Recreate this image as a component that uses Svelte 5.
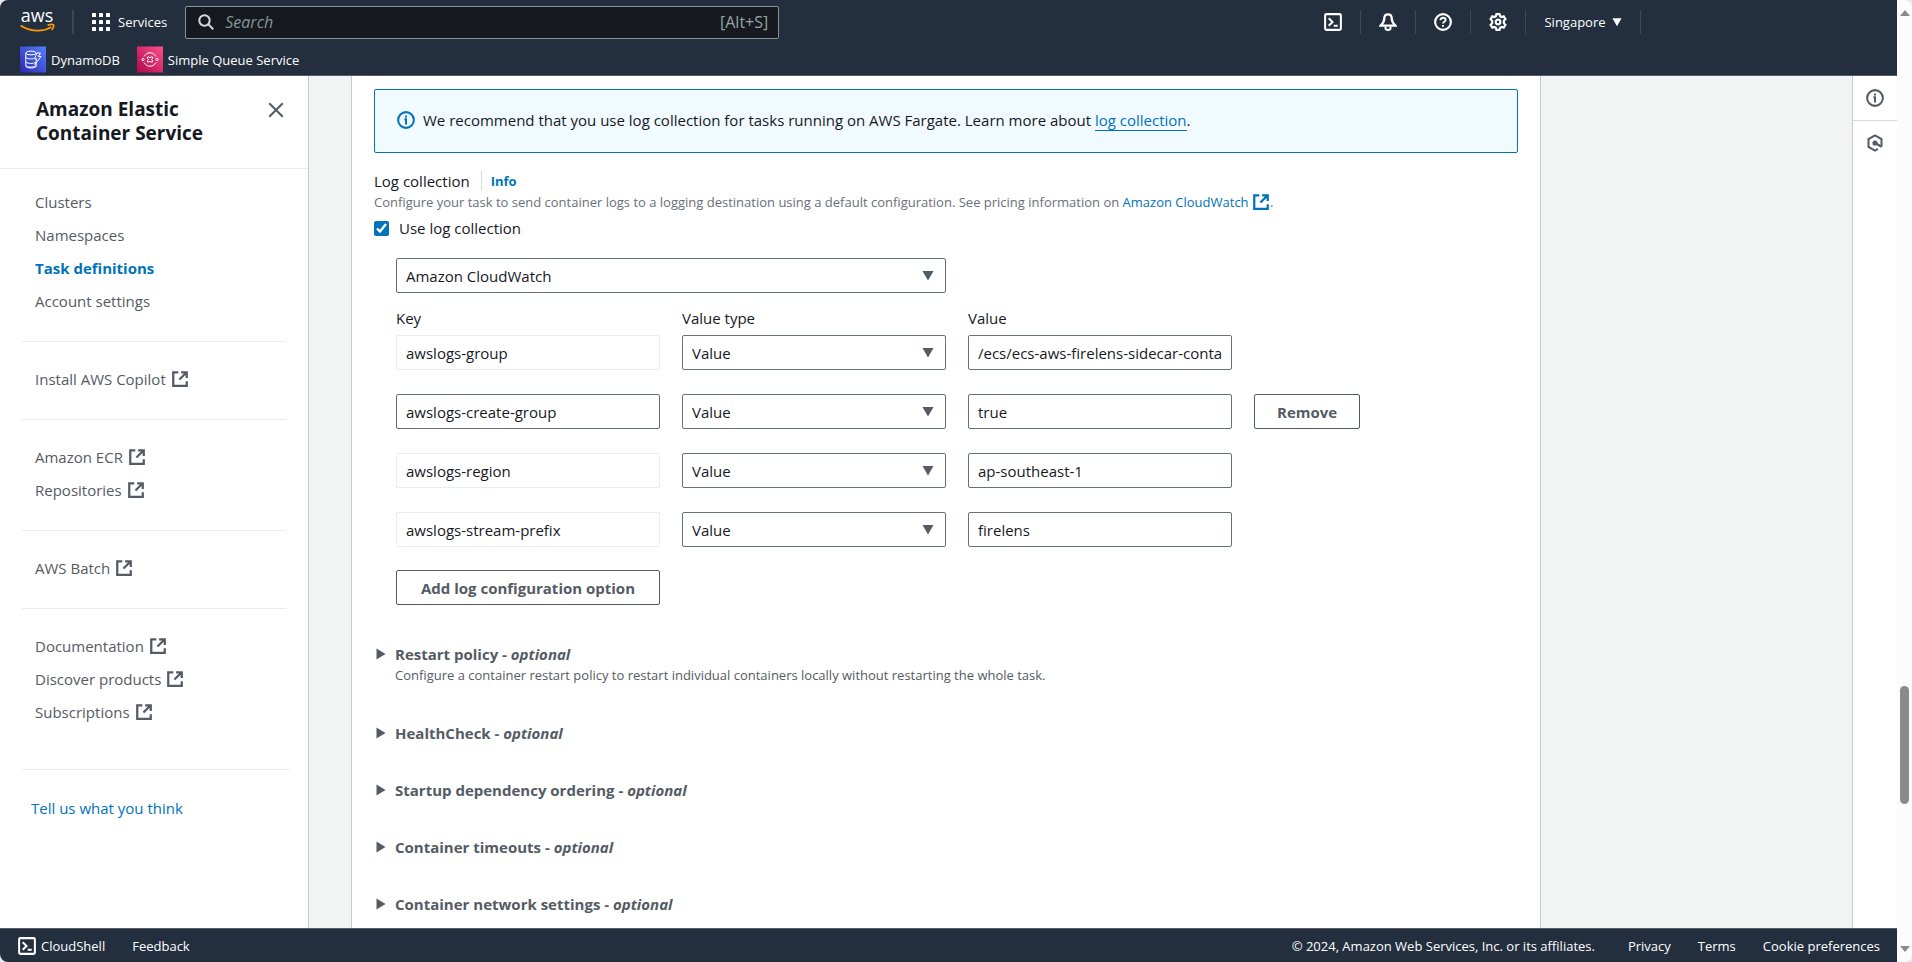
<script lang="ts">
    type NavLink = {
        text: string,
        external?: boolean,
        active?: boolean
    }

    type LogOption = {
        key: string,
        type: string,
        value: string,
        locked: boolean
    }

    const navGroups: NavLink[][] = [
        [
            { text: 'Clusters' },
            { text: 'Namespaces' },
            { text: 'Task definitions', active: true },
            { text: 'Account settings' }
        ],
        [{ text: 'Install AWS Copilot', external: true }],
        [
            { text: 'Amazon ECR', external: true },
            { text: 'Repositories', external: true }
        ],
        [{ text: 'AWS Batch', external: true }],
        [
            { text: 'Documentation', external: true },
            { text: 'Discover products', external: true },
            { text: 'Subscriptions', external: true }
        ]
    ];

    const sections = [
        {
            title: 'Restart policy',
            description: 'Configure a container restart policy to restart individual containers locally without restarting the whole task.'
        },
        { title: 'HealthCheck' },
        { title: 'Startup dependency ordering' },
        { title: 'Container timeouts' },
        { title: 'Container network settings' }
    ];

    let useLogs = $state(true);
    let destination = $state('Amazon CloudWatch');

    let options = $state<LogOption[]>([
        { key: 'awslogs-group', type: 'Value', value: '/ecs/ecs-aws-firelens-sidecar-container', locked: true },
        { key: 'awslogs-create-group', type: 'Value', value: 'true', locked: false },
        { key: 'awslogs-region', type: 'Value', value: 'ap-southeast-1', locked: true },
        { key: 'awslogs-stream-prefix', type: 'Value', value: 'firelens', locked: true }
    ]);

    function addOption(): void {
        options = [...options, { key: '', type: 'Value', value: '', locked: false }];
    }

    function removeOption(index: number): void {
        options = options.filter((_, i) => i !== index);
    }
</script>

{#snippet externalIcon()}
    <svg class="icon" viewBox="0 0 16 16" aria-hidden="true">
        <path d="M9 2h5v5M7.500 8.500 14 2M14 10v4H2V2h4.500" />
    </svg>
{/snippet}

{#snippet shellIcon()}
    <svg class="icon" viewBox="0 0 16 16" aria-hidden="true">
        <rect x="1" y="1" width="14" height="14" rx="1.2" stroke-width="1.8" />
        <path d="M4.2 4.6 7.6 8l-3.4 3.4M8.6 11.4h3.6" stroke-width="1.8" />
    </svg>
{/snippet}

{#snippet infoIcon()}
    <svg class="icon" viewBox="0 0 16 16" aria-hidden="true">
        <circle cx="8" cy="8" r="7" stroke-width="1.8" />
        <path d="M6.6 7.3H8V12M8 4v1.8" stroke-width="1.8" />
    </svg>
{/snippet}

{#snippet caret()}
    <svg class="caret" viewBox="0 0 12 10" aria-hidden="true">
        <path d="M.5 0h11L6 9.5z" />
    </svg>
{/snippet}

<div class="window">
    <div class="console">
        <header>
            <div class="topbar">
                <a class="logo" href="#home" aria-label="AWS home">
                    <svg viewBox="0 0 36 24" aria-hidden="true">
                        <text x="17" y="12" text-anchor="middle">aws</text>
                        <path d="M.6 15.600c9.600 6.400 22.400 6.600 30.600 1.400" />
                        <path d="M27.600 15.200c2.200-.8 5.200-1 5.800-.3.600.8-.3 3.300-1.800 5" />
                    </svg>
                </a>
                <button class="services">
                    <svg viewBox="0 0 18 18" aria-hidden="true">
                        {#each [0, 7, 14] as y}
                            {#each [0, 7, 14] as x}
                                <rect {x} {y} width="4" height="4" rx="0.5" />
                            {/each}
                        {/each}
                    </svg>
                    Services
                </button>
                <label class="search">
                    <svg viewBox="0 0 16 16" aria-hidden="true">
                        <circle cx="6.5" cy="6.5" r="5.2" />
                        <path d="m10.4 10.4 4.800 4.800" />
                    </svg>
                    <input type="search" placeholder="Search" aria-label="Search" />
                    <span>[Alt+S]</span>
                </label>
                <div class="tools">
                    <button aria-label="CloudShell">{@render shellIcon()}</button>
                    <button aria-label="Notifications">
                        <svg class="icon" viewBox="0 0 16 16" aria-hidden="true">
                            <path d="M8 1.200c-2.200 0-3.300 1.600-3.300 3.600 0 3-1.300 4.400-3.200 6.400h13c-1.900-2-3.200-3.400-3.200-6.400 0-2-1.100-3.600-3.300-3.600z" stroke-width="2" />
                            <path d="M5.800 12v1.600c0 2 4.400 2 4.400 0V12" stroke-width="1.8" />
                        </svg>
                    </button>
                    <button aria-label="Help">
                        <svg class="icon" viewBox="0 0 16 16" aria-hidden="true">
                            <circle cx="8" cy="8" r="7" stroke-width="1.9" />
                            <path d="M5.700 6.500c0-1.400 1-2.300 2.300-2.300s2.300.8 2.300 2c0 1.500-2.300 1.600-2.300 3.200M8 10.600v1.600" stroke-width="1.7" />
                        </svg>
                    </button>
                    <button aria-label="Settings">
                        <svg class="icon" viewBox="0 0 16 16" aria-hidden="true">
                            <path d="M6.600 1h2.800l.5 1.900 1.300.7 1.900-.6 1.500 2.500-1.400 1.400v2.200l1.400 1.400-1.500 2.500-1.900-.6-1.300.7L9.400 15H6.600l-.5-1.900-1.300-.7-1.900.6-1.500-2.500 1.400-1.400V6.900L1.400 5.500 2.900 3l1.900.6 1.300-.7z" stroke-width="1.9" />
                            <circle cx="8" cy="8" r="2.100" stroke-width="1.9" />
                        </svg>
                    </button>
                    <button class="region">Singapore {@render caret()}</button>
                </div>
            </div>
            <nav class="favorites" aria-label="Favorites">
                <a href="#dynamodb">
                    <svg viewBox="0 0 26 26" aria-hidden="true">
                        <defs>
                            <linearGradient id="dynamo" x1="0" y1="1" x2="1" y2="0">
                                <stop offset="0" stop-color="#2e27ad" />
                                <stop offset="1" stop-color="#527fff" />
                            </linearGradient>
                        </defs>
                        <rect width="26" height="26" fill="url(#dynamo)" />
                        <ellipse cx="11" cy="6.500" rx="5.200" ry="1.900" />
                        <path d="M5.800 6.500v13c0 2.600 10.400 2.600 10.400 0v-4M5.800 10.500c0 2 6 2.300 8 1.500M5.800 15c0 2 6 2.400 9 1.300M5.800 19c0 2 8 2.400 10.400 0M16.200 6.500v1" />
                        <path d="m17 6.500-2.500 6h2.300L15 18l6-8h-2.600l2.100-3.500z" />
                    </svg>
                    DynamoDB
                </a>
                <a href="#sqs">
                    <svg viewBox="0 0 26 26" aria-hidden="true">
                        <defs>
                            <linearGradient id="queue" x1="0" y1="1" x2="1" y2="0">
                                <stop offset="0" stop-color="#b0084d" />
                                <stop offset="1" stop-color="#ff4f8b" />
                            </linearGradient>
                        </defs>
                        <rect width="26" height="26" fill="url(#queue)" />
                        <path d="M7 10c2.800-5 9.200-5 12 0M7 16c2.800 5 9.200 5 12 0" />
                        <circle cx="6" cy="13" r="1.100" />
                        <circle cx="20" cy="13" r="1.100" />
                        <path d="M10.500 10.500h1.600l.9 1 .9-1h1.600v1.600l-1 .9 1 .9v1.600h-1.600l-.9-1-.9 1h-1.600v-1.600l1-.9-1-.9z" />
                    </svg>
                    Simple Queue Service
                </a>
            </nav>
        </header>

        <div class="body">
            <aside class="sidebar">
                <div class="sidebar-head">
                    <h2>Amazon Elastic Container Service</h2>
                    <button aria-label="Close navigation">
                        <svg class="icon" viewBox="0 0 16 16" aria-hidden="true">
                            <path d="m2 2 12 12M14 2 2 14" stroke-width="1.8" />
                        </svg>
                    </button>
                </div>
                <nav aria-label="Service navigation">
                    {#each navGroups as group}
                        <ul>
                            {#each group as link}
                                <li>
                                    <a href="#nav" class:active={link.active}>
                                        {link.text}
                                        {#if link.external}{@render externalIcon()}{/if}
                                    </a>
                                </li>
                            {/each}
                        </ul>
                    {/each}
                </nav>
                <div class="feedback">
                    <a href="#feedback">Tell us what you think</a>
                </div>
            </aside>

            <main>
                <div class="panel">
                    <div class="alert">
                        {@render infoIcon()}
                        <p>We recommend that you use log collection for tasks running on AWS Fargate. Learn more about <a href="#logs">log collection</a>.</p>
                    </div>

                    <div class="field-head">
                        <h3>Log collection</h3>
                        <a href="#info">Info</a>
                    </div>
                    <p class="hint">
                        Configure your task to send container logs to a logging destination using a default configuration. See pricing information on
                        <a href="#pricing">Amazon CloudWatch {@render externalIcon()}</a>.
                    </p>
                    <label class="check">
                        <input type="checkbox" bind:checked={useLogs} />
                        Use log collection
                    </label>

                    <div class="options">
                        <div class="select destination">
                            <select bind:value={destination} aria-label="Log destination">
                                <option>Amazon CloudWatch</option>
                            </select>
                            {@render caret()}
                        </div>

                        <div class="row labels">
                            <label for="key-0">Key</label>
                            <label for="type-0">Value type</label>
                            <label for="value-0">Value</label>
                        </div>
                        {#each options as option, i}
                            <div class="row">
                                <input type="text" id="key-{i}" aria-label="Key" readonly={option.locked} bind:value={option.key} />
                                <div class="select">
                                    <select id="type-{i}" aria-label="Value type" bind:value={option.type}>
                                        <option>Value</option>
                                        <option>ValueFrom</option>
                                    </select>
                                    {@render caret()}
                                </div>
                                <input type="text" id="value-{i}" aria-label="Value" bind:value={option.value} />
                                {#if !option.locked}
                                    <button class="button remove" onclick={() => removeOption(i)}>Remove</button>
                                {/if}
                            </div>
                        {/each}
                        <div class="row actions">
                            <button class="button" onclick={addOption}>Add log configuration option</button>
                        </div>
                    </div>

                    {#each sections as section}
                        <section>
                            <button class="expander">
                                <svg viewBox="0 0 10 12" aria-hidden="true"><path d="M.5.5v11L9.500 6z" /></svg>
                                <span>{section.title} - <em>optional</em></span>
                            </button>
                            {#if section.description}
                                <p>{section.description}</p>
                            {/if}
                        </section>
                    {/each}
                </div>
            </main>

            <aside class="rail">
                <button aria-label="Info panel">{@render infoIcon()}</button>
                <button aria-label="Diagnostics">
                    <svg class="icon" viewBox="0 0 16 16" aria-hidden="true">
                        <path d="M13.800 11.300V4.600L8 1.200 2.200 4.600v6.800L8 14.800l2.500-1.500" stroke-width="1.8" />
                        <path d="m8.500 8.300 5.300 3" stroke-width="2" />
                        <circle class="dot" cx="8" cy="8" r="2.300" />
                    </svg>
                </button>
            </aside>
        </div>

        <footer>
            <button>{@render shellIcon()} CloudShell</button>
            <a href="#feedback">Feedback</a>
            <span class="copyright">© 2024, Amazon Web Services, Inc. or its affiliates.</span>
            <a href="#privacy">Privacy</a>
            <a href="#terms">Terms</a>
            <a href="#cookies">Cookie preferences</a>
        </footer>
    </div>

    <div class="scrollbar" aria-hidden="true">
        <svg viewBox="0 0 10 6"><path d="M0 6h10L5 0z" /></svg>
        <div class="track">
            <div class="thumb"></div>
        </div>
        <svg viewBox="0 0 10 6"><path d="M0 0h10L5 6z" /></svg>
    </div>
</div>

<style>
    :global(body) {
        background: #e8eaed;
        color: #16191f;
        font: 15px/22px 'Open Sans', 'Noto Sans', sans-serif;
    }

    h2,
    h3,
    p,
    ul {
        margin: 0;
        padding: 0;
        list-style: none;
    }

    a {
        color: #0073bb;
        text-decoration: none;
    }

    button,
    input,
    select {
        box-sizing: border-box;
        color: inherit;
        font: inherit;
    }

    button {
        padding: 0;
        border: 0;
        background: none;
        cursor: pointer;
    }

    .icon {
        flex: none;
        width: 18px;
        height: 18px;
        fill: none;
        stroke: currentColor;
        stroke-width: 2;
    }

    .caret {
        width: 12px;
        height: 10px;
        fill: currentColor;
    }

    .window {
        display: flex;
        height: 100vh;
        border-radius: 8px;
        overflow: hidden;
    }

    .console {
        display: flex;
        flex: 1;
        flex-direction: column;
        min-width: 0;
    }

    header,
    footer {
        flex: none;
        background: #232f3e;
        color: #fff;
        font-size: 13px;
        font-weight: 500;
    }

    header {
        padding-bottom: 2px;
        border-bottom: 1px solid #545b64;
    }

    .topbar {
        display: flex;
        align-items: center;
        height: 44px;
    }

    .logo {
        margin-left: 20px;
        padding-right: 16px;
        border-right: 2px solid #414750;
        height: 24px;
    }

    .logo svg {
        display: block;
        width: 36px;
        height: 24px;
        overflow: visible;
        fill: none;
        stroke: #f90;
        stroke-width: 1.8;
    }

    .logo text {
        fill: #fff;
        stroke: none;
        font-size: 18px;
        font-weight: 500;
    }

    .services {
        display: flex;
        align-items: center;
        gap: 8px;
        margin: 0 18px;
    }

    .services svg {
        width: 18px;
        height: 18px;
        fill: #fff;
    }

    .search {
        display: flex;
        flex: 0 1 594px;
        align-items: center;
        gap: 11px;
        box-sizing: border-box;
        height: 33px;
        padding: 0 10px 0 12px;
        border: 1px solid #879596;
        border-radius: 2px;
        background: #16191f;
        color: #95a5a6;
        font-size: 16px;
        font-weight: 400;
    }

    .search svg {
        flex: none;
        width: 16px;
        height: 16px;
        fill: none;
        stroke: #d5dbdb;
        stroke-width: 2;
    }

    .search input {
        flex: 1;
        min-width: 0;
        padding: 0;
        border: 0;
        outline: 0;
        background: none;
    }

    .search input::placeholder {
        color: #879596;
        font-style: italic;
    }

    .tools {
        display: flex;
        margin-left: auto;
        margin-right: 256px;
    }

    .tools button {
        display: flex;
        align-items: center;
        justify-content: center;
        width: 55px;
        height: 24px;
        border-right: 1px solid #414750;
    }

    .tools .region {
        gap: 6px;
        width: 115px;
    }

    .region .caret {
        width: 10px;
        height: 9px;
    }

    .favorites {
        display: flex;
        gap: 17px;
        padding: 2px 0 0 20px;
    }

    .favorites a {
        display: flex;
        align-items: center;
        gap: 5px;
        color: #fff;
    }

    .favorites svg {
        width: 26px;
        height: 27px;
        fill: none;
        stroke: #fff;
        stroke-width: 1;
    }

    .favorites rect {
        stroke: none;
    }

    .body {
        display: flex;
        flex: 1;
        min-height: 0;
    }

    .sidebar {
        flex: none;
        box-sizing: border-box;
        width: 309px;
        border-right: 1px solid #c6cacd;
        background: #fff;
        color: #545b64;
        overflow: hidden;
    }

    .sidebar-head {
        display: flex;
        align-items: flex-start;
        justify-content: space-between;
        padding: 21px 23px 23px 36px;
        border-bottom: 1px solid #eaeded;
        color: #16191f;
    }

    .sidebar-head h2 {
        width: 180px;
        font-size: 19px;
        font-weight: 700;
        line-height: 24px;
    }

    .sidebar-head button {
        display: flex;
        padding: 4px 0;
        color: #545b64;
    }

    .sidebar nav {
        padding: 16px 22px 0;
    }

    .sidebar ul + ul {
        margin-top: 24px;
        padding-top: 20px;
        border-top: 1px solid #eaeded;
    }

    .sidebar li a {
        display: flex;
        align-items: center;
        gap: 5px;
        height: 33px;
        padding-left: 13px;
        color: #545b64;
    }

    .sidebar li .active {
        color: #0073bb;
        font-weight: 700;
    }

    .feedback {
        margin: 41px 18px 0 22px;
        padding: 27px 9px;
        border-top: 1px solid #eaeded;
    }

    main {
        flex: 1;
        min-width: 0;
        padding: 0 311px 0 42px;
        background: #f2f3f3;
        overflow: hidden;
    }

    .panel {
        min-height: 100%;
        box-sizing: border-box;
        padding: 13px 22px 0;
        border: solid #c6cacd;
        border-width: 0 1px;
        background: #fff;
    }

    .alert {
        display: flex;
        align-items: center;
        gap: 8px;
        padding: 19px 22px 21px;
        border: 1px solid #0073bb;
        border-radius: 2px;
        background: #f1faff;
    }

    .alert .icon {
        color: #0073bb;
    }

    .alert a {
        border-bottom: 1px solid #0073bb;
    }

    .field-head {
        display: flex;
        align-items: center;
        margin-top: 17px;
    }

    .field-head h3 {
        padding-right: 11px;
        border-right: 1px solid #d5dbdb;
        font-size: 15px;
        font-weight: 400;
        line-height: 20px;
    }

    .field-head a {
        padding-left: 9px;
        font-size: 13px;
        font-weight: 700;
    }

    .hint {
        color: #687078;
        font-size: 13px;
        line-height: 20px;
    }

    .hint .icon {
        margin: -4px 0;
    }

    .check {
        display: flex;
        align-items: center;
        gap: 10px;
        margin-top: 5px;
    }

    .check input {
        width: 15px;
        height: 15px;
        margin: 0;
        accent-color: #0073bb;
    }

    .options {
        padding: 19px 0 0 22px;
    }

    .row {
        display: grid;
        grid-template-columns: repeat(4, 1fr);
        gap: 22px;
        margin-bottom: 24px;
    }

    .labels {
        margin: 14px 0 6px;
    }

    .actions {
        margin: -1px 0 0;
    }

    .options input,
    .select select {
        width: 100%;
        height: 35px;
        padding: 0 9px;
        border: 1px solid #687078;
        border-radius: 2px;
        background: #fff;
    }

    .options input:read-only {
        border-color: #eaeded;
    }

    .select {
        position: relative;
    }

    .select select {
        appearance: none;
    }

    .select .caret {
        position: absolute;
        top: 13px;
        right: 12px;
        color: #545b64;
        pointer-events: none;
    }

    .destination {
        width: calc(50% - 11px);
    }

    .button {
        height: 35px;
        padding: 0 22px;
        border: 1px solid #545b64;
        border-radius: 2px;
        background: #fff;
        color: #545b64;
        font-weight: 700;
        white-space: nowrap;
    }

    .remove {
        justify-self: start;
    }

    section {
        margin-top: 35px;
        color: #545b64;
    }

    .options + section {
        margin-top: 38px;
    }

    .expander {
        display: flex;
        align-items: center;
        gap: 9px;
        padding-left: 2px;
        font-weight: 700;
    }

    .expander svg {
        width: 10px;
        height: 12px;
        fill: currentColor;
    }

    section p {
        padding: 0 0 2px 21px;
        font-size: 13px;
        line-height: 20px;
    }

    .rail {
        flex: none;
        display: flex;
        flex-direction: column;
        width: 44px;
        border-left: 1px solid #c6cacd;
        background: #fff;
        color: #545b64;
    }

    .rail button {
        display: flex;
        align-items: center;
        justify-content: center;
        height: 44px;
    }

    .rail button:first-child {
        height: 45px;
        border-bottom: 1px solid #d5dbdb;
    }

    .dot {
        fill: currentColor;
        stroke: none;
    }

    footer {
        display: flex;
        align-items: center;
        gap: 27px;
        height: 33px;
        padding: 0 17px 0 18px;
        border-top: 1px solid #545b64;
    }

    footer button {
        display: flex;
        align-items: center;
        gap: 5px;
    }

    footer a {
        color: #fff;
    }

    .copyright {
        margin-left: auto;
        padding-right: 6px;
    }

    .scrollbar {
        display: flex;
        flex: none;
        flex-direction: column;
        align-items: center;
        width: 15px;
        padding: 10px 0;
        box-sizing: border-box;
        background: #fcfcfc;
    }

    .scrollbar svg {
        width: 10px;
        height: 6px;
        fill: #8b8b8b;
    }

    .track {
        display: flex;
        flex: 1;
        flex-direction: column;
    }

    .track::before {
        content: '';
        flex: 670;
    }

    .track::after {
        content: '';
        flex: 142;
    }

    .thumb {
        flex: 118;
        width: 9px;
        border-radius: 5px;
        background: #8b8b8b;
    }
</style>
